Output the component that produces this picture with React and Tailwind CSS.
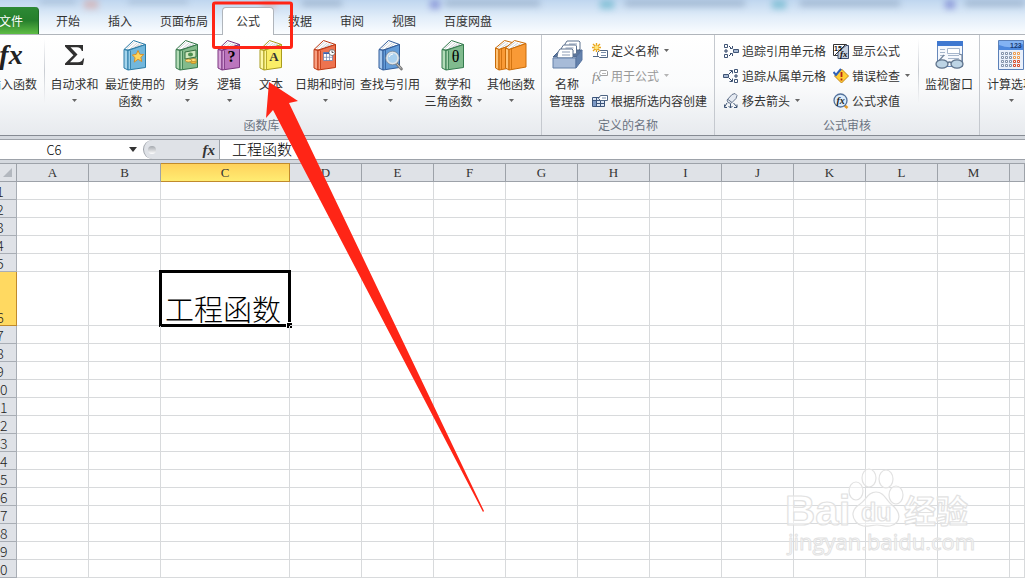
import { useState } from "react"

const tabs = ["开始", "插入", "页面布局", "公式", "数据", "审阅", "视图", "百度网盘"]

const columns = ["A", "B", "C", "D", "E", "F", "G", "H", "I", "J", "K", "L", "M", "N"]

const rows = Array.from({ length: 20 }, (_, i) => i + 1)

const Caret = ({ light }) => (
  <svg width="5" height="3" viewBox="0 0 5 3" className="shrink-0" aria-hidden="true">
    <path d="M0 0h5L2.5 3z" fill={light ? "#b5b5b5" : "#666"} />
  </svg>
)

// Closed book standing at an angle, children are drawn on the cover
const Book = ({ cover, edge, light, children }) => (
  <svg width="24" height="32" viewBox="0 0 24 32" aria-hidden="true">
    <path d="M1 10.5 10.5 1.5 22.5 5.5 5 11z" fill="#fff" stroke={edge} strokeLinejoin="round" />
    <path d="M4 9.5 11.5 3M7 10 14 4M10.5 9 16.5 4.5M13 8 19 5" stroke="#b9bec4" strokeWidth=".7" />
    <path d="M1 10.5 5 11.5V31L1 29z" fill={light} stroke={edge} strokeLinejoin="round" />
    <path d="M5 11.5 22.5 5.5V28.5L5 31z" fill={cover} stroke={edge} strokeLinejoin="round" />
    <path d="M7.5 11.5V30" stroke={edge} strokeWidth=".8" />
    <path d="M6.3 12V30" stroke={light} strokeWidth="1" />
    {children}
  </svg>
)

const FxLarge = () => (
  <span className="pr-1 font-['Liberation_Serif',serif] text-[28px] leading-8 font-bold italic text-[#222]">fx</span>
)

const Sigma = () => (
  <svg width="24" height="32" viewBox="0 0 24 32" aria-hidden="true">
    <path d="M2 6H20V12H18.8Q18 8.2 14 8.2H7.5L14.5 15.5 7 23.3H15Q19 23.3 20 19.5H21.2L20 26H2V24.5L10.4 16.3 2 7.5z" fill="#303030" />
  </svg>
)

const RecentIcon = () => (
  <Book cover="#72b7dc" edge="#2b7ba6" light="#a5d5ec">
    <path d="m15 11.5 1.8 3.8 4 .2-3 2.8 1 4.2-3.8-2.2-3.8 2.8.9-4.4-2.8-2.6 4-.8z" fill="#ffd75e" stroke="#d88a20" strokeWidth=".9" />
  </Book>
)

const MoneyIcon = () => (
  <Book cover="#82bb8b" edge="#35774a" light="#b2dbb6">
    <path d="M10 13 21 11v7l-11 2z" fill="#cfe8bf" stroke="#377041" />
    <ellipse cx="15.5" cy="15.5" rx="2.5" ry="2" fill="#4c8f4f" />
    <ellipse cx="18.5" cy="23" rx="3" ry="1.5" fill="#f1be37" stroke="#ae7b1e" strokeWidth=".7" />
    <ellipse cx="18.5" cy="21" rx="3" ry="1.5" fill="#ffe07b" stroke="#ae7b1e" strokeWidth=".7" />
    <ellipse cx="13.5" cy="21.5" rx="3" ry="1.5" fill="#ffe07b" stroke="#ae7b1e" strokeWidth=".7" />
  </Book>
)

const LogicIcon = () => (
  <Book cover="#bb75bd" edge="#7a3580" light="#d8a6d9">
    <text x="14.5" y="23" textAnchor="middle" className="font-['Liberation_Serif',serif] text-[16px] font-bold">?</text>
  </Book>
)

const TextIcon = () => (
  <Book cover="#faee67" edge="#a99c1e" light="#fdf7a8">
    <text x="15" y="22" textAnchor="middle" fill="#333" className="font-['Liberation_Serif',serif] text-[13px] font-bold">A</text>
  </Book>
)

const DateIcon = () => (
  <Book cover="#ee7350" edge="#bd3812" light="#f8a083">
    <path d="M10.5 13.5h9v8h-9z" fill="#fff" stroke="#6d83ae" strokeWidth=".8" />
    <path d="M10.5 14.2h9" stroke="#3e63b2" strokeWidth="1.6" />
    <path d="M13.5 15v6.5M16.5 15v6.5M10.5 18.3h9" stroke="#6d83ae" strokeWidth=".7" />
    <circle cx="19" cy="13.5" r="3" fill="#fff" stroke="#555" strokeWidth=".7" />
    <path d="M19 11.5v2h1.6" fill="none" stroke="#333" strokeWidth=".8" />
  </Book>
)

const LookupIcon = () => (
  <svg width="28" height="32" viewBox="0 0 28 32" aria-hidden="true">
    <path d="M3 10.5 12.5 1.5 23.5 5.5 7 11z" fill="#fff" stroke="#315c9a" strokeLinejoin="round" />
    <path d="M6 9.5 13.5 3M9 10 16 4M12.5 9 18.5 4.5" stroke="#b9bec4" strokeWidth=".7" />
    <path d="M3 10.5 7 11.5V31L3 29z" fill="#a4c7ee" stroke="#315c9a" />
    <path d="M7 11.5 23.5 5.5V28.5L7 31z" fill="#639cd8" stroke="#315c9a" />
    <path d="M9.5 11V30" stroke="#315c9a" strokeWidth=".8" />
    <path d="m20 24 5.5 6" stroke="#777" strokeWidth="2.6" strokeLinecap="round" />
    <path d="m20 24 5 5.5" stroke="#d5d5d5" strokeWidth="1" />
    <circle cx="16.5" cy="19" r="5.8" fill="#a9d0ef" stroke="#dfe5ea" strokeWidth="2" />
    <circle cx="16.5" cy="19" r="6.8" fill="none" stroke="#73818f" strokeWidth=".7" />
    <path d="M13 18q1-3 4-3" fill="none" stroke="#fff" />
  </svg>
)

const MathIcon = () => (
  <Book cover="#80bb8e" edge="#347b4e" light="#b3dcb9">
    <text x="14.5" y="23" textAnchor="middle" className="font-['Liberation_Serif',serif] text-[16px]">θ</text>
  </Book>
)

const OtherIcon = () => (
  <svg width="34" height="32" viewBox="0 0 34 32" aria-hidden="true">
    {[0, 10].map((x) => (
      <g key={x} transform={`translate(${x} 0)`} stroke="#c96b08" strokeLinejoin="round">
        <path d="M1.5 9 10.5 1.5 22 4.5 5 10.5z" fill="#fff" />
        <path d="M4 8.5 11.5 3M7 9 14 4M11 8 17 4.5" stroke="#b9bec4" strokeWidth=".7" />
        <path d="M1.5 9 5 10.5V31L1.5 29z" fill="#ffc275" />
        <path d="M5 10.5 22 4.5V28L5 31z" fill="#f99a36" />
        <path d="M7.5 10V30" strokeWidth=".8" />
      </g>
    ))}
  </svg>
)

const NameManagerIcon = () => (
  <svg width="32" height="32" viewBox="0 0 32 32" aria-hidden="true">
    <path d="M2 18 9 11H31L25 18z" fill="#5c779e" stroke="#47638c" />
    {[[13, 2], [9.5, 6], [6, 10]].map(([x, y]) => (
      <g key={x}>
        <path d={`M${x + 3} ${y}h12l1 1v7l-1 1h-14l-1-1 1-5z`} fill="#fff" stroke="#5d7290" />
        <path d={`M${x + 5} ${y + 3}h8M${x + 5} ${y + 6}h8`} stroke="#8b9bb4" />
      </g>
    ))}
    <path d="M2 19H25V29H2z" fill="#a7bbd8" stroke="#6480a8" />
    <path d="m25 19 6-8v10l-6 8z" fill="#6482ad" stroke="#5874a0" />
  </svg>
)

const WatchIcon = () => (
  <svg width="32" height="32" viewBox="0 0 32 32" aria-hidden="true">
    <path d="M4.500 2.500h25v25h-25z" fill="#f5f8fd" stroke="#6788ba" />
    <path d="M4 2h26v5H4z" fill="#3f78d0" />
    <path d="M7 10.500h5M7 13.500h5M7 16.500h5M15 16.500h11M15 19.500h11" stroke="#a6b6cc" />
    <path d="M14.500 9.500h12v5h-12z" fill="#fff" stroke="#a6b6cc" />
    <path d="M4 24 11 16M29 24V16l-3-1" fill="none" stroke="#71839b" strokeWidth="1.200" />
    <ellipse cx="9" cy="25" rx="6" ry="4.200" fill="#bdd4e5" stroke="#61758d" strokeWidth="1.300" />
    <ellipse cx="24" cy="25" rx="6" ry="4.200" fill="#bdd4e5" stroke="#61758d" strokeWidth="1.300" />
    <path d="M14.500 24q2-2 4 0" fill="none" stroke="#61758d" strokeWidth="1.300" />
  </svg>
)

const CalcIcon = () => (
  <svg width="26" height="32" viewBox="0 0 26 32" aria-hidden="true">
    <path d="M.5 1.500h25v29H.5z" fill="#e9f0fb" stroke="#5b80b8" />
    <path d="M1 2h24v9H1z" fill="#4d88dd" />
    <path d="M1 11V6Q14 11 25 5V2H1z" fill="#83b3f3" />
    <text x="12" y="9" fill="#1b3c74" className="font-['Liberation_Sans',sans-serif] text-[7px] font-bold">123</text>
    {[13, 17, 21, 25].map((y) =>
      [3, 7, 11, 15, 19].map((x) => (
        <path
          key={`${x}-${y}`}
          d={`M${x}.5 ${y}.5h2v2h-2z`}
          fill="#fff"
          stroke={x < 15 ? "#8292aa" : y < 21 ? "#ee9b4b" : "#d84d2b"}
        />
      ))
    )}
  </svg>
)

const Icon16 = ({ children }) => (
  <svg width="16" height="16" viewBox="0 0 16 16" fill="none" className="shrink-0" aria-hidden="true">
    {children}
  </svg>
)

const DefineNameIcon = () => (
  <Icon16>
    <path d="M7.500 7.500h8v7h-8l-2-2v-3z" fill="#fff" stroke="#4f6583" />
    <path d="M9 9.500h5M9 12.500h5" stroke="#7b90ad" />
    <path d="M1 13.500h5" stroke="#4f6583" />
    <path d="M4.500 0v9M0 4.500h9M1 1l7 7M8 1 1 8" stroke="#e9a51c" strokeWidth="1.400" />
    <circle cx="4.500" cy="4.500" r="2" fill="#ffe577" />
  </Icon16>
)

const UseFormulaIcon = () => (
  <Icon16>
    <text x="0" y="13" fill="#888" className="font-['Liberation_Serif',serif] text-[13px] italic">fx</text>
    <path d="M8.500 2.500h6l1 1v4h-7l-1-2z" fill="#fff" stroke="#a3a3a3" />
    <path d="M10 5.500h4" stroke="#b7b7b7" />
  </Icon16>
)

const CreateFromIcon = () => (
  <Icon16>
    <path d="M.5 4.500h12v9H.5z" fill="#dce6f4" stroke="#3c557b" />
    <path d="M.5 7.500h12M.5 10.500h12M4.500 4.500v9M8.500 4.500v9" stroke="#3c557b" />
    <path d="M1 8h3v5H1z" fill="#7c99c5" />
    <path d="M8.500 2.500h7v5h-7l-2-2z" fill="#fff" stroke="#4f6583" />
    <path d="M10 5h4" stroke="#7b90ad" />
  </Icon16>
)

const PrecedentsIcon = () => (
  <Icon16>
    <path d="M1.500 1.500h3v3h-3zM1.500 11.500h3v3h-3z" fill="#fff" stroke="#3f5475" />
    <path d="M10.500 6.500h5v3h-5z" fill="#a7b9d3" stroke="#3f5475" />
    <path d="M3 6v4M1 8h4" stroke="#2f4365" />
    <path d="m6 3 3 3M6 13l3-3" stroke="#2f4365" />
    <path d="M7 5.500h2.500V3M7 10.500h2.500V13" stroke="#3f5475" />
  </Icon16>
)

const DependentsIcon = () => (
  <Icon16>
    <path d="M.5 6.500h5v3h-5z" fill="#a7b9d3" stroke="#3f5475" />
    <path d="M11.500 1.500h3v3h-3zM11.500 11.500h3v3h-3z" fill="#fff" stroke="#3f5475" />
    <path d="M13 6v4M11 8h4M6 6l3-3M6 10l3 3" stroke="#2f4365" />
    <path d="M6.500 2.500h3v3M6.500 13.500h3v-3" stroke="#3f5475" />
  </Icon16>
)

const RemoveArrowsIcon = () => (
  <Icon16>
    <path d="m4 7 5-5.500 3-1 2 2-1 3-5 5-3-1z" fill="#e5eaf2" stroke="#66758d" />
    <path d="m5 6.500 4 3" stroke="#66758d" />
    <path d="m4 10-2.500 4M7.500 11v4M10.500 10l3.500 4M1.500 11.500v3H4M5.500 13l2 2 2-2M11 14.500h3v-3" stroke="#3f5475" />
  </Icon16>
)

const ShowFormulaIcon = () => (
  <Icon16>
    <path d="M.5 1.500h13v11H.5z" fill="#fff" stroke="#333" />
    <path d="M5 15.500V9l8-6.500h2.500v13z" fill="#c5cfde" stroke="#3b4e70" />
    <path d="M1 13 13 1" stroke="#333" />
    <text x="1" y="8" fill="#111" className="font-['Liberation_Sans',sans-serif] text-[7px] font-bold">15</text>
    <text x="7" y="14" fill="#111" className="font-['Liberation_Serif',serif] text-[9px] font-bold italic">fx</text>
  </Icon16>
)

const ErrorCheckIcon = () => (
  <Icon16>
    <path d="m8.500 1 7 7-7 7-7-7z" fill="#ffcf35" stroke="#c4861b" />
    <path d="M8.500 4v5M8.500 10.500v2" stroke="#b3261b" strokeWidth="1.800" />
    <path d="m.5 4 2.500 3 5-6" stroke="#2e61b8" strokeWidth="2" />
  </Icon16>
)

const EvaluateIcon = () => (
  <Icon16>
    <path d="m11 12 3.500 3" stroke="#e39a2b" strokeWidth="2.500" />
    <circle cx="7.500" cy="7.500" r="6.500" fill="#dcecfb" stroke="#53719b" strokeWidth="1.300" />
    <text x="3.500" y="11" fill="#222" className="font-['Liberation_Serif',serif] text-[10px] font-bold italic">fx</text>
  </Icon16>
)

const library = [
  { icon: <Sigma />, lines: ["自动求和", ""], width: "w-[59px]" },
  { icon: <RecentIcon />, lines: ["最近使用的", "函数"], width: "w-[62px]" },
  { icon: <MoneyIcon />, lines: ["财务", ""], width: "w-[42px]" },
  { icon: <LogicIcon />, lines: ["逻辑", ""], width: "w-[42px]" },
  { icon: <TextIcon />, lines: ["文本", ""], width: "w-[42px]" },
  { icon: <DateIcon />, lines: ["日期和时间", ""], width: "w-[66px]" },
  { icon: <LookupIcon />, lines: ["查找与引用", ""], width: "w-[64px]" },
  { icon: <MathIcon />, lines: ["数学和", "三角函数"], width: "w-[62px]" },
  { icon: <OtherIcon />, lines: ["其他函数", ""], width: "w-[54px]" },
]

const LargeButton = ({ icon, lines, width, caret = true }) => (
  <button type="button" className={`flex shrink-0 flex-col items-center leading-[17px] whitespace-nowrap ${width}`}>
    <span className="flex h-9 items-start justify-center">{icon}</span>
    <span>{lines[0]}</span>
    <span className="flex h-[17px] items-center gap-1">
      {lines[1]}
      {caret && <Caret />}
    </span>
  </button>
)

const SmallButton = ({ icon, label, caret, disabled }) => (
  <button
    type="button"
    disabled={disabled}
    className="flex h-[25px] items-center gap-[3px] whitespace-nowrap disabled:text-[#999]"
  >
    {icon}
    <span>{label}</span>
    {caret && <span className="ml-0.5"><Caret light={disabled} /></span>}
  </button>
)

const Group = ({ title, className, children }) => (
  <section className={`flex shrink-0 flex-col border-r border-[#c5c9cf] ${className}`}>
    <div className="flex h-[82px] pt-1">{children}</div>
    <h2 className="pb-0.5 text-center leading-4 text-[#6b7482]">{title}</h2>
  </section>
)

const ButtonList = ({ className, children }) => (
  <div className={`-mt-px shrink-0 ${className}`}>{children}</div>
)

const Separator = () => (
  <div className="h-16 w-px shrink-0 bg-linear-to-b from-transparent via-[#c9cdd3] to-transparent" />
)

const TabBar = ({ active, onSelect }) => (
  <nav className="relative flex h-[35px] items-end border-b border-[#b0b5bb] bg-linear-to-b from-[#bfd6ef] via-[#e1edf9] to-[#fbfdff]">
    {/* Windows behind the glass title bar */}
    <svg className="absolute inset-x-0 top-0 h-3 w-full opacity-50 blur-[3px]" aria-hidden="true">
      <path d="M40 0h36M128 0h60M302 3h40M445 3h95M625 3h120M800 3h100M965 3h60" stroke="#8299b5" strokeWidth="7" />
      <path d="M84 4h14M262 4h14" stroke="#dc9a92" strokeWidth="10" />
      <path d="M430 4h10M945 4h10" stroke="#5961c4" strokeWidth="10" />
      <path d="M600 4h14M772 4h14" stroke="#48a9bf" strokeWidth="10" />
    </svg>
    <button type="button" className="relative mr-[3px] flex h-[27px] w-[39px] shrink-0 items-center justify-end rounded-tr-sm border-r border-[#206b28] bg-linear-to-b from-[#2d8a35] via-[#257f2c] to-[#5fbd45] pr-[15px] whitespace-nowrap text-white">
      文件
    </button>
    {tabs.map((tab) => (
      <button
        key={tab}
        type="button"
        onClick={() => onSelect(tab)}
        className={`relative -mb-px h-7 shrink-0 rounded-t-sm border-x border-t px-[13px] pb-0.5 ${
          active === tab ? "border-[#b0b5bb] bg-white" : "border-transparent"
        }`}
      >
        {tab}
      </button>
    ))}
  </nav>
)

const Ribbon = () => (
  <div className="flex overflow-hidden border-b border-[#868b93] bg-linear-to-b from-white via-[#fafbfc] to-[#e7eaee]">
    <Group title="函数库" className="-ml-[18px] w-[560px]">
      <div className="flex w-[62px] shrink-0 justify-end pr-[7px]">
        <LargeButton icon={<FxLarge />} lines={["插入函数", ""]} width="w-12" caret={false} />
      </div>
      <Separator />
      {library.map((item) => (
        <LargeButton key={item.lines[0]} {...item} />
      ))}
    </Group>
    <Group title="定义的名称" className="w-[173px]">
      <LargeButton icon={<NameManagerIcon />} lines={["名称", "管理器"]} width="w-[50px]" caret={false} />
      <ButtonList>
        <SmallButton icon={<DefineNameIcon />} label="定义名称" caret />
        <SmallButton icon={<UseFormulaIcon />} label="用于公式" caret disabled />
        <SmallButton icon={<CreateFromIcon />} label="根据所选内容创建" />
      </ButtonList>
    </Group>
    <Group title="公式审核" className="w-[265px]">
      <ButtonList className="w-[118px] pl-2">
        <SmallButton icon={<PrecedentsIcon />} label="追踪引用单元格" />
        <SmallButton icon={<DependentsIcon />} label="追踪从属单元格" />
        <SmallButton icon={<RemoveArrowsIcon />} label="移去箭头" caret />
      </ButtonList>
      <ButtonList className="w-[85px]">
        <SmallButton icon={<ShowFormulaIcon />} label="显示公式" />
        <SmallButton icon={<ErrorCheckIcon />} label="错误检查" caret />
        <SmallButton icon={<EvaluateIcon />} label="公式求值" />
      </ButtonList>
      <Separator />
      <LargeButton icon={<WatchIcon />} lines={["监视窗口", ""]} width="w-[60px]" caret={false} />
    </Group>
    <div className="pt-1 pl-[5px]">
      <LargeButton icon={<CalcIcon />} lines={["计算选项", ""]} width="w-[52px]" />
    </div>
  </div>
)

const FormulaBar = ({ value, onChange }) => (
  <div className="bg-[#d5d9df] pt-[3px] pb-[3px]">
    <div className="flex h-[21px] border-y border-[#9da2a9] bg-white">
      <input
        aria-label="名称框"
        defaultValue="C6"
        className="w-[108px] text-center font-['Noto_Sans_CJK_SC',sans-serif] text-[13px] font-light text-black outline-none"
      />
      <button type="button" aria-label="名称列表" className="flex w-[35px] items-center justify-end pr-1.5">
        <svg width="8" height="5" viewBox="0 0 8 5" aria-hidden="true">
          <path d="M0 0h8L4 5z" fill="#333" />
        </svg>
      </button>
      <div className="flex w-[77px] items-center justify-between rounded-l-full border-r border-l border-[#9da2a9] bg-[#dfe2e7] pr-1 pl-1">
        <span className="size-2 rounded-full bg-linear-to-b from-[#a4a8ae] to-white" />
        <button type="button" aria-label="插入函数" className="font-['Liberation_Serif',serif] text-[15px] leading-4 font-bold italic">
          fx
        </button>
      </div>
      <input
        aria-label="编辑栏"
        value={value}
        onChange={onChange}
        className="min-w-0 flex-1 pl-3 text-[15px] font-light text-black outline-none"
      />
    </div>
  </div>
)

const Sheet = ({ value }) => (
  <table className="w-full table-fixed border-separate border-spacing-0 bg-white font-['Liberation_Serif','Noto_Sans_CJK_SC',serif] text-black">
    <colgroup>
      <col className="w-[17px]" />
      {columns.map((column) => (
        <col key={column} className={column === "C" ? "w-[129px]" : column === "N" ? "" : "w-[72px]"} />
      ))}
    </colgroup>
    <thead>
      <tr className="h-[19px]">
        <th className="border-t border-r border-b border-[#9da2a9] bg-[#dfe2e7] p-0">
          <svg width="9" height="9" viewBox="0 0 9 9" className="ml-[3px]" aria-hidden="true">
            <path d="M9 0v9H0z" fill="#b3b8bf" />
          </svg>
        </th>
        {columns.map((column) => (
          <th
            key={column}
            scope="col"
            className={`border-t border-r border-b p-0 text-[13px] leading-[17px] font-normal text-[#333] ${
              column === "C"
                ? "border-[#c08a2c] bg-linear-to-b from-[#ffd25c] to-[#ffec72]"
                : "border-[#9da2a9] bg-[#dfe2e7]"
            }`}
          >
            {column === "N" ? "" : column}
          </th>
        ))}
      </tr>
    </thead>
    <tbody>
      {rows.map((row) => (
        <tr key={row} className={row === 6 ? "h-[54px]" : "h-[18px]"}>
          <th
            scope="row"
            className={`border-r border-b p-0 align-bottom font-['Noto_Sans_CJK_SC',sans-serif] text-[14px] leading-4 font-light text-[#222] ${
              row === 6 ? "border-[#c08a2c] bg-[#ffd961]" : "border-[#a9aeb5] bg-[#dfe2e7]"
            }`}
          >
            <span className="flex w-0 justify-center">{row}</span>
          </th>
          {columns.map((column) => {
            const selected = row === 6 && column === "C"
            return (
              <td key={column} className="relative border-r border-b border-[#d8dadc] p-0 align-bottom">
                {selected && (
                  <>
                    <div className="pr-1 text-center text-[29px] leading-7 font-light">{value}</div>
                    <div className="absolute -inset-0.5 border-3 border-black" />
                    <div className="absolute -right-[3px] -bottom-[3px] size-1.5 border-t border-l border-white bg-black" />
                  </>
                )}
              </td>
            )
          })}
        </tr>
      ))}
    </tbody>
  </table>
)

const Watermark = () => (
  <svg
    className="pointer-events-none absolute top-[464px] left-[780px] font-['Liberation_Sans','Noto_Sans_CJK_SC',sans-serif]"
    width="196"
    height="96"
    viewBox="0 0 196 96"
    fill="#fff"
    fillOpacity=".5"
    stroke="#e2e2e2"
    strokeWidth="1.2"
    strokeLinejoin="round"
    aria-hidden="true"
  >
    <text x="5" y="61" className="text-[42px] font-bold">Bai</text>
    <ellipse cx="76" cy="27" rx="7" ry="9" />
    <ellipse cx="89" cy="14" rx="7" ry="9" />
    <ellipse cx="106" cy="15" rx="7" ry="9" />
    <ellipse cx="116" cy="31" rx="7" ry="9" />
    <path d="M96 28C88 28 86 36 80 40C72 45 71 52 76 58C82 65 90 61 97 61C104 61 111 65 117 58C122 51 117 45 111 40C106 36 104 28 96 28z" />
    <text x="81" y="57" className="text-[25px] font-bold">du</text>
    <text x="124" y="59" className="text-[32px] font-bold">经验</text>
    <text x="8" y="86" strokeWidth="1" className="font-['Open_Sans',sans-serif] text-[22px]">jingyan.baidu.com</text>
  </svg>
)

// Red box around the tab and the arrow pointing up at the ribbon
const Annotation = () => (
  <svg className="pointer-events-none absolute top-0 left-0" width="500" height="520" viewBox="0 0 500 520" aria-hidden="true">
    <rect x="213.500" y="3" width="78" height="44.500" rx="1.500" fill="none" stroke="#ff2516" strokeWidth="3" />
    <path d="M269 82 298 101 289 103 484 511 483 512 273 110 266 118z" fill="#ff2516" />
  </svg>
)

const App = () => {
  const [active, setActive] = useState("公式")
  const [value, setValue] = useState("工程函数")

  return (
    <div className="relative overflow-hidden bg-white font-['Noto_Sans_CJK_SC',sans-serif] text-[12px] text-[#333]">
      <TabBar active={active} onSelect={setActive} />
      <Ribbon />
      <FormulaBar value={value} onChange={(e) => setValue(e.target.value)} />
      <Sheet value={value} />
      <Watermark />
      <Annotation />
    </div>
  )
}

export default App
